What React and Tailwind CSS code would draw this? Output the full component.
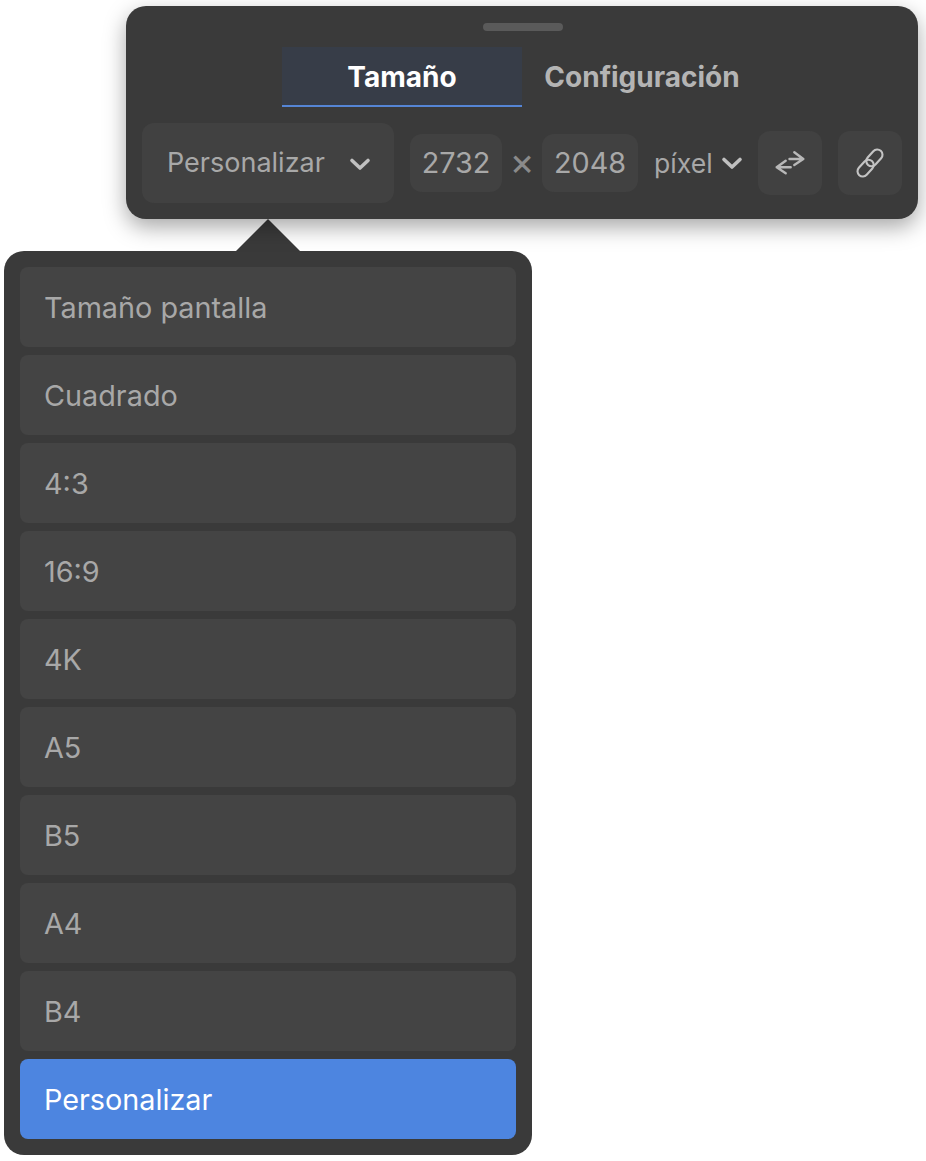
import React from 'react';

const sizes = ['Tamaño pantalla', 'Cuadrado', '4:3', '16:9', '4K', 'A5', 'B5', 'A4', 'B4'];

function Chevron({ className }) {
  return (
    <svg viewBox="0 0 22 14" fill="none" className={className}>
      <path d="M3 3.5 L11 11 L19 3.5" stroke="currentColor" strokeWidth="3.6" strokeLinecap="round" strokeLinejoin="round" />
    </svg>
  );
}

function SwapIcon() {
  return (
    <svg viewBox="0 0 32 28" fill="none" className="w-8 h-7 shrink-0 text-[#b8b8b8]">
      <path d="M15.5 10 H29.3 M20.3 3.3 L29.3 10 L20.3 16" stroke="currentColor" strokeWidth="2.4" strokeLinecap="round" strokeLinejoin="round" />
      <path d="M16.7 18.3 H2.7 M11.7 11.7 L2.7 18.3 L11.7 24.3" stroke="currentColor" strokeWidth="2.4" strokeLinecap="round" strokeLinejoin="round" />
    </svg>
  );
}

function LinkIcon() {
  return (
    <svg viewBox="0 0 28 28" fill="none" className="w-7 h-7 shrink-0 overflow-visible text-[#c4c4c4]">
      <g stroke="currentColor" strokeWidth="2.1">
        <rect x="-5.25" y="-9.5" width="10.5" height="19" rx="5.25" transform="translate(18.4 8.9) rotate(42)" />
        <rect x="-5.25" y="-9.5" width="10.5" height="19" rx="5.25" transform="translate(9.6 19.1) rotate(42)" />
      </g>
    </svg>
  );
}

export default function App() {
  return (
    <div className="w-[926px] h-[1161px] bg-white pt-[6px] overflow-hidden font-['Inter',sans-serif]">
      {/* Top toolbar */}
      <div className="relative z-10 ml-[126px] w-[792px] h-[213px] rounded-[20px] bg-[#3a3a3a] px-4 pt-[17px] shadow-[0_8px_22px_rgba(0,0,0,0.35)]">
        <div className="ml-[341px] w-20 h-2 rounded-full bg-[#5a5a5a]" />
        <div className="flex justify-center mt-4 text-[28px] font-bold">
          <div className="w-60 h-[60px] flex items-center justify-center pt-[2px] bg-[#373d48] border-b-2 border-[#5585d5] text-white">Tamaño</div>
          <div className="w-60 h-[60px] flex items-center justify-center text-[#b4b4b4]">Configuración</div>
        </div>
        <div className="flex items-center mt-4 text-[#a8a8a8]">
          <div className="w-[252px] h-20 shrink-0 rounded-xl bg-[#414141] flex items-center justify-between pl-[25px] pr-[23px] pt-px text-[27px]">
            <span>Personalizar</span>
            <Chevron className="w-[22px] h-[14px] text-[#c0c0c0]" />
          </div>
          <div className="ml-4 w-[92px] h-[58px] shrink-0 rounded-xl bg-[#414141] flex items-center justify-center text-[28.8px]">2732</div>
          <span className="w-10 h-[58px] shrink-0 flex items-center justify-center pb-1 text-[#8a8a8a] text-[38px] leading-none">×</span>
          <div className="w-24 h-[58px] shrink-0 rounded-xl bg-[#414141] flex items-center justify-center text-[28.8px]">2048</div>
          <span className="ml-[16px] w-[67px] shrink-0 pt-px text-[26.6px]">píxel</span>
          <Chevron className="w-[22px] h-[14px] shrink-0 text-[#c0c0c0]" />
          <div className="ml-[15px] w-16 h-16 shrink-0 rounded-xl bg-[#414141] flex items-center justify-center">
            <SwapIcon />
          </div>
          <div className="ml-4 w-16 h-16 shrink-0 rounded-xl bg-[#414141] flex items-center justify-center">
            <LinkIcon />
          </div>
        </div>
      </div>

      {/* Size dropdown */}
      <div className="relative ml-1 mt-8 w-[528px] rounded-[20px] bg-[#3a3a3a] p-4 flex flex-col gap-2 text-[28.8px]">
        <div className="absolute left-[232px] top-[-32px] w-0 h-0 border-x-[32px] border-x-transparent border-b-[32px] border-b-[#3a3a3a]" />
        {sizes.map((label) => (
          <div key={label} className="h-20 rounded-lg bg-[#444444] flex items-center pl-6 pt-[2px] text-[#a8a8a8]">
            {label}
          </div>
        ))}
        <div className="h-20 rounded-lg bg-[#4d85e0] flex items-center pl-6 pt-[2px] text-white">Personalizar</div>
      </div>
    </div>
  );
}
